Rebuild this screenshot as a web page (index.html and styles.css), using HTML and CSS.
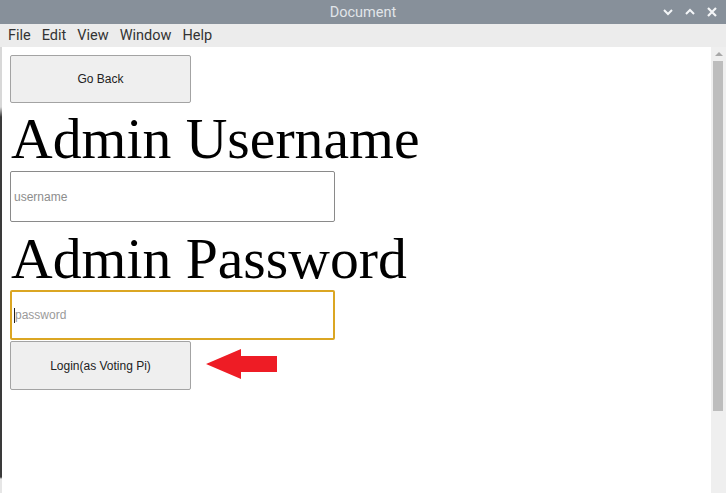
FILE: index.html
```html
<!DOCTYPE html>
<html>
<head>
<meta charset="utf-8">
<link rel="stylesheet" href="styles.css">
</head>
<body>
<div class="window">
  <div class="titlebar">
    <span class="title">Document</span>
    <div class="controls">
      <svg width="12" height="10" viewBox="0 0 12 10"><path d="M2 3 L6 7 L10 3" fill="none" stroke="#f4f6f8" stroke-width="2"/></svg>
      <svg width="12" height="10" viewBox="0 0 12 10"><path d="M2 7 L6 3 L10 7" fill="none" stroke="#f4f6f8" stroke-width="2"/></svg>
      <svg width="12" height="10" viewBox="0 0 12 10"><path d="M2 1 L10 9 M10 1 L2 9" fill="none" stroke="#f4f6f8" stroke-width="2.2"/></svg>
    </div>
  </div>
  <div class="menubar">
    <span>File</span><span>Edit</span><span>View</span><span>Window</span><span>Help</span>
  </div>
  <div class="body">
    <div class="edge"></div>
    <div class="content">
      <button class="btn btn-back">Go Back</button>
      <h1 class="label label-user">Admin Username</h1>
      <input class="field" type="text" placeholder="username">
      <h1 class="label label-pass">Admin Password</h1>
      <div class="field field-focus"><span class="caret"></span><span class="ph">password</span></div>
      <div class="login-row">
        <button class="btn btn-login">Login(as Voting Pi)</button>
        <svg class="arrow" width="72" height="32" viewBox="0 0 72 32"><path d="M0 16 L35 1 L35 8 L71 8 L71 24 L35 24 L35 31 Z" fill="#ee1c25"/></svg>
      </div>
    </div>
    <div class="scrollbar">
      <div class="sb-up"></div>
      <div class="sb-thumb"></div>
    </div>
  </div>
</div>
</body>
</html>
```
FILE: styles.css
```css
* { box-sizing: border-box; }
html, body { margin: 0; padding: 0; }
body { width: 726px; height: 493px; overflow: hidden; background: #fff; }
.window { display: flex; flex-direction: column; height: 493px; }
.titlebar {
  height: 24px; background: #87909a; position: relative;
  display: flex; align-items: center; justify-content: center;
}
.title { font-family: Roboto, "Liberation Sans", sans-serif; font-size: 14.5px; color: #e1e5e9; }
.controls { position: absolute; right: 8px; top: 7px; display: flex; gap: 10px; }
.controls svg { display: block; }
.menubar {
  height: 23px; background: #ececec; display: flex; align-items: center;
  padding-left: 8px; gap: 11px;
  font-family: Roboto, "Liberation Sans", sans-serif; font-size: 14.5px; color: #333;
}
.body { flex: 1; display: flex; }
.edge {
  width: 2px;
  background: linear-gradient(to bottom, #d8d8d8 0, #d8d8d8 60px, #3a3a3a 70px, #3a3a3a 430px, #e6e6e6 432px);
}
.content { flex: 1; padding: 8px 0 0 8px; display: flex; flex-direction: column; align-items: flex-start; background: #fff; }
.btn {
  width: 181px; height: 48px; background: #efefef; border: 1px solid #a3a3a3; border-radius: 2px;
  font-family: "Liberation Sans", Arial, sans-serif; font-size: 12px; color: #222; padding: 0;
}
.label {
  margin: 0; font-family: "Liberation Serif", "Times New Roman", serif; font-weight: normal;
  font-size: 57.7px; line-height: 63px; color: #000; padding-left: 1px;
}
.label-user { margin-top: 4px; margin-bottom: 1px; }
.label-pass { margin-top: 5px; }
.field {
  width: 325px; height: 51px; border: 1px solid #8a8a8a; border-radius: 2px; padding: 0 3px;
  font-family: "Liberation Sans", Arial, sans-serif; font-size: 12px; outline: none; background: #fff;
}
.field::placeholder { color: #8d8d8d; }
.field-focus {
  height: 50px; border: 2px solid #dba623; display: flex; align-items: center; padding: 0 2px;
}
.caret { width: 1px; height: 15px; background: #222; }
.ph { color: #9a9a9a; }
.login-row { display: flex; align-items: flex-start; margin-top: 1px; }
.btn-login { height: 49px; }
.arrow { margin-left: 15px; margin-top: 7px; display: block; }
.scrollbar { width: 15px; background: #efefef; position: relative; }
.sb-up {
  position: absolute; left: 4px; top: 5px; width: 0; height: 0;
  border-left: 4px solid transparent; border-right: 4px solid transparent; border-bottom: 4px solid #a8a8a8;
}
.sb-thumb { position: absolute; left: 2px; top: 14px; width: 10px; height: 350px; background: #bdbdbd; }
```
